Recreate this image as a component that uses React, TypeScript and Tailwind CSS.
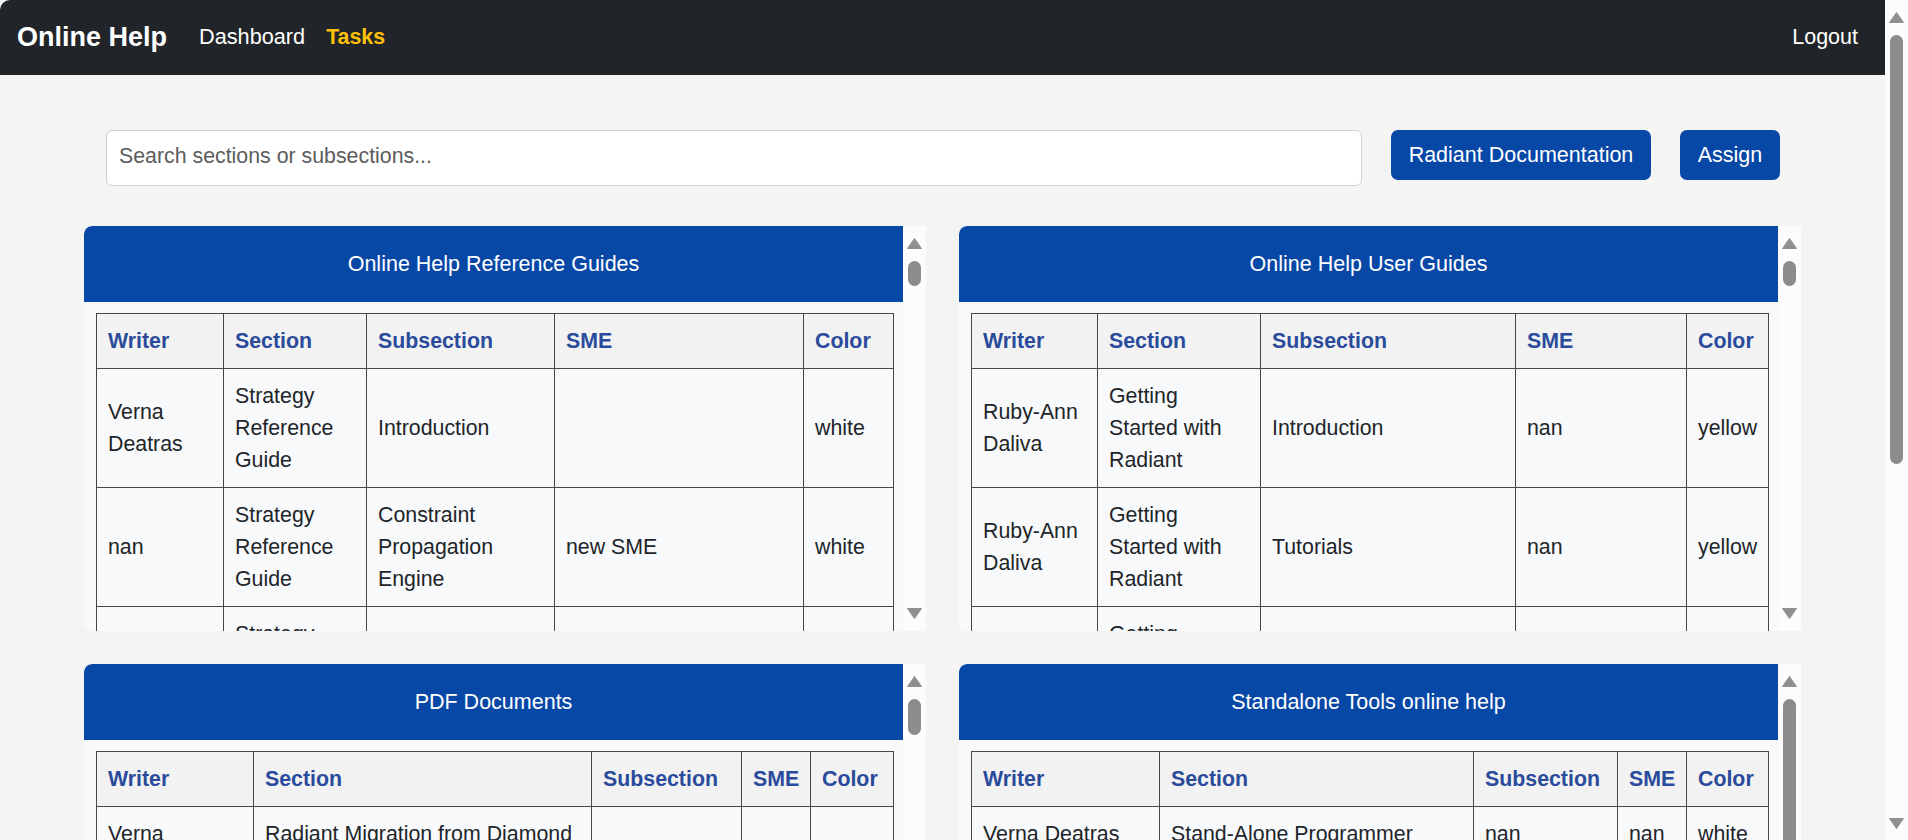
import React from "react";

type Row = string[];

const Arrow = ({ down }: { down?: boolean }) => (
  <svg width="15" height="11" viewBox="0 0 15 11" className="block shrink-0">
    {down ? (
      <polygon points="0.5,0.5 14.5,0.5 7.5,10.5" fill="#8f8f8f" stroke="#8f8f8f" strokeLinejoin="round" />
    ) : (
      <polygon points="7.5,0.5 14.5,10.5 0.5,10.5" fill="#8f8f8f" stroke="#8f8f8f" strokeLinejoin="round" />
    )}
  </svg>
);

function ScrollBar({ thumb, bottomPad }: { thumb: string; bottomPad: string }) {
  return (
    <div className={`w-[23px] shrink-0 bg-[#fcfcfc] flex flex-col items-center pt-[12px] ${bottomPad}`}>
      <Arrow />
      <div className={`mt-[12px] w-[13px] rounded-full bg-[#8c8c8c] ${thumb}`} />
      <div className="flex-1" />
      <Arrow down />
    </div>
  );
}

function Panel({
  title,
  cols,
  rows,
  thumb,
}: {
  title: string;
  cols: string[];
  rows: Row[];
  thumb: string;
}) {
  const heads = ["Writer", "Section", "Subsection", "SME", "Color"];
  return (
    <div className="h-[405px] flex rounded-l-[8px] overflow-hidden bg-[#f8f9fa]">
      <div className="flex-1 min-w-0 flex flex-col overflow-hidden">
        <div className="h-[76px] shrink-0 bg-[#0747a6] text-white text-[21.5px] flex items-center justify-center rounded-tl-[8px]">
          {title}
        </div>
        <div className="pl-[12px] pr-[10px] pt-[11px]">
          <table className="w-full table-fixed border-collapse text-[21.33px] leading-[32px] text-[#212529]">
            <colgroup>
              {cols.map((c, i) => (
                <col key={i} className={c} />
              ))}
            </colgroup>
            <thead>
              <tr>
                {heads.map((h) => (
                  <th
                    key={h}
                    className="border border-[#474747] bg-[#f2f2f2] p-[11px] text-left align-middle font-bold text-[#2a4b9b]"
                  >
                    {h}
                  </th>
                ))}
              </tr>
            </thead>
            <tbody>
              {rows.map((r, i) => (
                <tr key={i}>
                  {r.map((c, j) => (
                    <td key={j} className="border border-[#474747] bg-[#f8f9fa] p-[11px] align-middle">
                      {c}
                    </td>
                  ))}
                </tr>
              ))}
            </tbody>
          </table>
        </div>
      </div>
      <ScrollBar thumb={thumb} bottomPad="pb-[12px]" />
    </div>
  );
}

export default function App() {
  return (
    <div className="h-screen w-full flex overflow-hidden bg-white font-['Liberation_Sans',Arial,sans-serif]">
      <div className="flex-1 min-w-0 flex flex-col overflow-hidden bg-[#f4f4f4]">
        <nav className="h-[75px] shrink-0 bg-[#212529] rounded-tl-[10px] flex items-center pl-[17px] pr-[27px]">
          <span className="text-[27px] font-bold text-white mr-[32px]">Online Help</span>
          <a className="text-[21.7px] text-white mr-[21px]">Dashboard</a>
          <a className="text-[21.33px] font-bold text-[#ffc107]">Tasks</a>
          <a className="text-[21.5px] text-white ml-auto">Logout</a>
        </nav>

        <div className="px-[84px] pt-[55px]">
          <div className="flex items-start gap-[29px] ml-[22px] mr-[21px]">
            <input
              className="flex-1 min-w-0 h-[56px] bg-white border border-[#cfcfcf] rounded-[6px] px-[12px] pb-[4px] text-[21.33px] text-[#333] placeholder:text-[#5c5c5c] outline-none"
              placeholder="Search sections or subsections..."
            />
            <button className="w-[260px] h-[50px] shrink-0 rounded-[7px] bg-[#0747a6] text-white text-[21.5px]">
              Radiant Documentation
            </button>
            <button className="w-[100px] h-[50px] shrink-0 rounded-[7px] bg-[#0747a6] text-white text-[21.5px]">
              Assign
            </button>
          </div>

          <div className="grid grid-cols-2 gap-[33px] mt-[40px] pb-[50px]">
            <Panel
              title="Online Help Reference Guides"
              cols={["w-[127px]", "w-[143px]", "w-[188px]", "w-[249px]", "w-[90px]"]}
              thumb="h-[25px]"
              rows={[
                ["Verna Deatras", "Strategy Reference Guide", "Introduction", "", "white"],
                ["nan", "Strategy Reference Guide", "Constraint Propagation Engine", "new SME", "white"],
                ["nan", "Strategy Reference Guide", "Expressions", "nan", "white"],
                ["nan", "Strategy Reference Guide", "Functions", "nan", "white"],
              ]}
            />
            <Panel
              title="Online Help User Guides"
              cols={["w-[126px]", "w-[163px]", "w-[255px]", "w-[171px]", "w-[82px]"]}
              thumb="h-[25px]"
              rows={[
                ["Ruby-Ann Daliva", "Getting Started with Radiant", "Introduction", "nan", "yellow"],
                ["Ruby-Ann Daliva", "Getting Started with Radiant", "Tutorials", "nan", "yellow"],
                ["Ruby-Ann Daliva", "Getting Started with Radiant", "Installation", "nan", "yellow"],
                ["Ruby-Ann Daliva", "Getting Started with Radiant", "Licensing", "nan", "yellow"],
              ]}
            />
            <Panel
              title="PDF Documents"
              cols={["w-[157px]", "w-[338px]", "w-[150px]", "w-[69px]", "w-[83px]"]}
              thumb="h-[36px]"
              rows={[
                ["Verna Deatras", "Radiant Migration from Diamond Tools", "", "", ""],
                ["nan", "Radiant Installation Guide", "", "", ""],
                ["nan", "Radiant Release Notes", "", "", ""],
              ]}
            />
            <Panel
              title="Standalone Tools online help"
              cols={["w-[188px]", "w-[314px]", "w-[144px]", "w-[69px]", "w-[82px]"]}
              thumb="h-[250px]"
              rows={[
                ["Verna Deatras", "Stand-Alone Programmer", "nan", "nan", "white"],
                ["Verna Deatras", "Stand-Alone Utilities", "nan", "nan", "white"],
              ]}
            />
            <Panel
              title="Training Materials"
              cols={["w-[157px]", "w-[338px]", "w-[150px]", "w-[69px]", "w-[83px]"]}
              thumb="h-[60px]"
              rows={[["nan", "Radiant Training Guide", "nan", "nan", "white"]]}
            />
            <Panel
              title="Release Notes"
              cols={["w-[188px]", "w-[314px]", "w-[144px]", "w-[69px]", "w-[82px]"]}
              thumb="h-[60px]"
              rows={[["nan", "Radiant Release Notes", "nan", "nan", "white"]]}
            />
          </div>
        </div>
      </div>
      <ScrollBar thumb="h-[429px]" bottomPad="pb-[11px]" />
    </div>
  );
}
